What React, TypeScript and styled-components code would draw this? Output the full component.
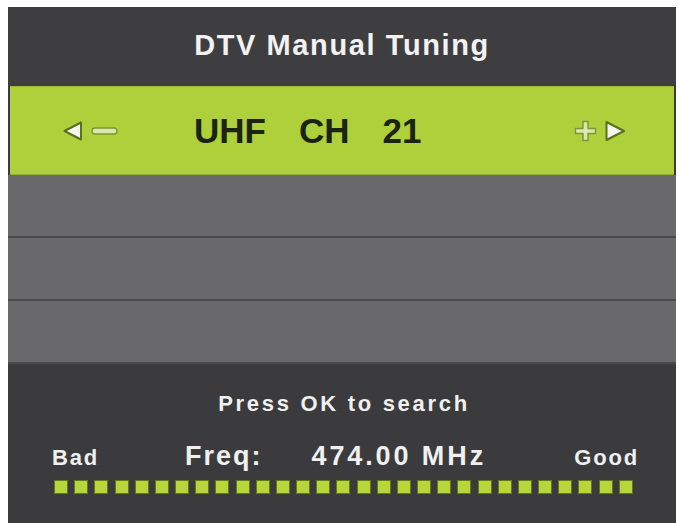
import styled, { createGlobalStyle } from 'styled-components';

const GlobalStyle = createGlobalStyle`
  html, body {
    margin: 0;
    padding: 0;
    background: #ffffff;
    overflow: hidden;
  }
`;

const Screen = styled.div`
  width: 679px;
  height: 523px;
  padding: 7px 3px 0 8px;
  box-sizing: border-box;
`;

const Panel = styled.div`
  width: 668px;
  height: 516px;
  display: flex;
  flex-direction: column;
  background: #3b3b3d;
  font-family: 'Liberation Sans', Arial, sans-serif;
  font-weight: bold;
`;

const TitleBar = styled.div`
  height: 79px;
  display: flex;
  align-items: center;
  justify-content: center;
  background: #3e3e40;
  color: #f2f2f2;
  font-size: 29px;
  letter-spacing: 1.6px;
  padding-bottom: 2px;
  box-sizing: border-box;
`;

const ChannelBar = styled.div`
  height: 89px;
  margin: 0 2px;
  display: flex;
  align-items: center;
  padding: 0 48px 0 52px;
  background: #aed03a;
  border-top: 1px solid #9dbb35;
  border-bottom: 1px solid #93ae33;
  box-sizing: border-box;
`;

const Controls = styled.div`
  display: flex;
  align-items: center;
  gap: 8px;
`;

const Channel = styled.div`
  display: flex;
  gap: 33px;
  margin-left: 76px;
  color: #1c2311;
  font-size: 35px;
`;

const RightControls = styled(Controls)`
  margin-left: auto;
  gap: 7px;
`;

const EmptyRow = styled.div`
  height: 63px;
  background: #69696b;
  border-bottom: 2px solid #4b4b4d;
  box-sizing: border-box;
`;

const Footer = styled.div`
  flex: 1;
  display: flex;
  flex-direction: column;
  color: #f0f0f0;
`;

const Hint = styled.div`
  margin-top: 27px;
  text-align: center;
  font-size: 22px;
  line-height: 26px;
  letter-spacing: 2.7px;
  padding-left: 4px;
`;

const InfoRow = styled.div`
  margin-top: 24px;
  display: flex;
  align-items: baseline;
  padding: 0 37px 0 44px;
  line-height: 31px;
`;

const Label = styled.span<{ $push?: boolean }>`
  font-size: 22px;
  letter-spacing: 1.8px;
  margin-left: ${({ $push }) => ($push ? 'auto' : '0')};
`;

const FreqLabel = styled.span`
  font-size: 27px;
  letter-spacing: 2px;
  margin-left: 86px;
`;

const FreqValue = styled.span`
  font-size: 27px;
  letter-spacing: 2.9px;
  margin-left: 49px;
`;

const Meter = styled.div`
  margin: 7px 43px 0 46px;
  display: flex;
  justify-content: space-between;
`;

const Cell = styled.div`
  width: 14px;
  height: 14px;
  box-sizing: border-box;
  background: #b8d63c;
  border: 1.5px solid #5f7a18;
`;

const ArrowLeft = () => (
  <svg width="21" height="20" viewBox="0 0 21 20">
    <polygon points="19,1.5 19,18.5 2.5,10" fill="#f5f7ee" stroke="#5a7020" strokeWidth="2" strokeLinejoin="round" />
  </svg>
);

const ArrowRight = () => (
  <svg width="22" height="22" viewBox="0 0 22 22">
    <polygon points="2.5,2 2.5,20 20,11" fill="#f5f7ee" stroke="#5a7020" strokeWidth="2" strokeLinejoin="round" />
  </svg>
);

const Minus = () => (
  <svg width="27" height="8" viewBox="0 0 27 8">
    <rect x="1" y="1" width="25" height="6" rx="3" fill="#dbe8ad" stroke="#7d9535" strokeWidth="1.4" />
  </svg>
);

const Plus = () => (
  <svg width="23" height="22" viewBox="0 0 23 22">
    <path
      d="M9 1.5 h5 v7 h7.5 v5 h-7.5 v7 h-5 v-7 h-7.5 v-5 h7.5 z"
      fill="#dbe8ad"
      stroke="#7d9535"
      strokeWidth="1.4"
      strokeLinejoin="round"
    />
  </svg>
);

export default function App() {
  const cells = Array.from({ length: 29 }, (_, i) => i);

  return (
    <Screen>
      <GlobalStyle />
      <Panel>
        <TitleBar>DTV Manual Tuning</TitleBar>
        <ChannelBar>
          <Controls>
            <ArrowLeft />
            <Minus />
          </Controls>
          <Channel>
            <span>UHF</span>
            <span>CH</span>
            <span>21</span>
          </Channel>
          <RightControls>
            <Plus />
            <ArrowRight />
          </RightControls>
        </ChannelBar>
        <EmptyRow />
        <EmptyRow />
        <EmptyRow />
        <Footer>
          <Hint>Press OK to search</Hint>
          <InfoRow>
            <Label>Bad</Label>
            <FreqLabel>Freq:</FreqLabel>
            <FreqValue>474.00 MHz</FreqValue>
            <Label $push>Good</Label>
          </InfoRow>
          <Meter>
            {cells.map((i) => (
              <Cell key={i} />
            ))}
          </Meter>
        </Footer>
      </Panel>
    </Screen>
  );
}
